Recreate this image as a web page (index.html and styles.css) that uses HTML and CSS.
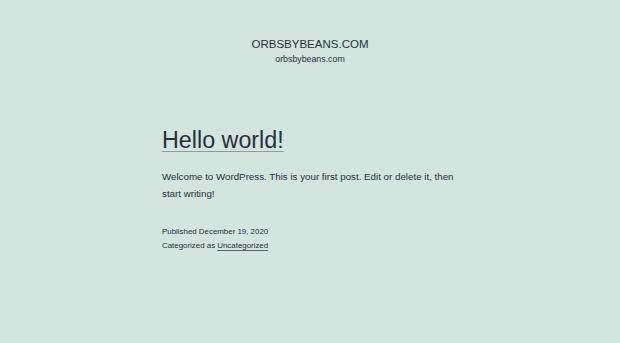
FILE: index.html
```html
<!DOCTYPE html>
<html lang="en">
<head>
<meta charset="utf-8">
<title>orbsbybeans.com</title>
<link rel="stylesheet" href="styles.css">
</head>
<body>
<header class="site-header">
  <p class="site-title"><a href="#">ORBSBYBEANS.COM</a></p>
  <p class="site-description">orbsbybeans.com</p>
</header>
<main class="site-main">
  <article class="post">
    <h2 class="entry-title"><a href="#">Hello world!</a></h2>
    <div class="entry-content">
      <p>Welcome to WordPress. This is your first post. Edit or delete it, then start writing!</p>
    </div>
    <footer class="entry-footer">
      <span class="posted-on">Published <time>December 19, 2020</time></span>
      <span class="cat-links">Categorized as <a href="#">Uncategorized</a></span>
    </footer>
  </article>
</main>
</body>
</html>
```

FILE: styles.css
```css
html, body {
  margin: 0;
  padding: 0;
  background: #d1e4dd;
  color: #28303d;
  font-family: "Liberation Sans", Arial, sans-serif;
}

a {
  color: #28303d;
}

.site-header {
  padding-top: 36.5px;
  display: flex;
  flex-direction: column;
  align-items: center;
}

.site-title {
  margin: 0;
  font-size: 11.5px;
  line-height: 15px;
}

.site-title a {
  text-decoration: none;
}

.site-description {
  margin: 1.5px 0 0;
  font-size: 8.8px;
  line-height: 12px;
}

.site-main {
  width: 298px;
  margin: 0 auto;
  padding: 60.5px 0 0 2px;
}

.entry-title {
  margin: 0;
  font-size: 23.3px;
  line-height: 28px;
  font-weight: normal;
}

.entry-title a {
  text-decoration: underline;
  text-decoration-color: #8d9b9c;
  text-decoration-thickness: 1px;
  text-underline-offset: 3px;
}

.entry-content p {
  margin: 15.7px 0 0;
  font-size: 9.75px;
  line-height: 16.7px;
}

.entry-footer {
  margin-top: 22px;
  display: flex;
  flex-direction: column;
  font-size: 7.9px;
  line-height: 14px;
}

.entry-footer a {
  text-decoration-color: #59626c;
  text-decoration-thickness: 1px;
  text-underline-offset: 2px;
}
```
